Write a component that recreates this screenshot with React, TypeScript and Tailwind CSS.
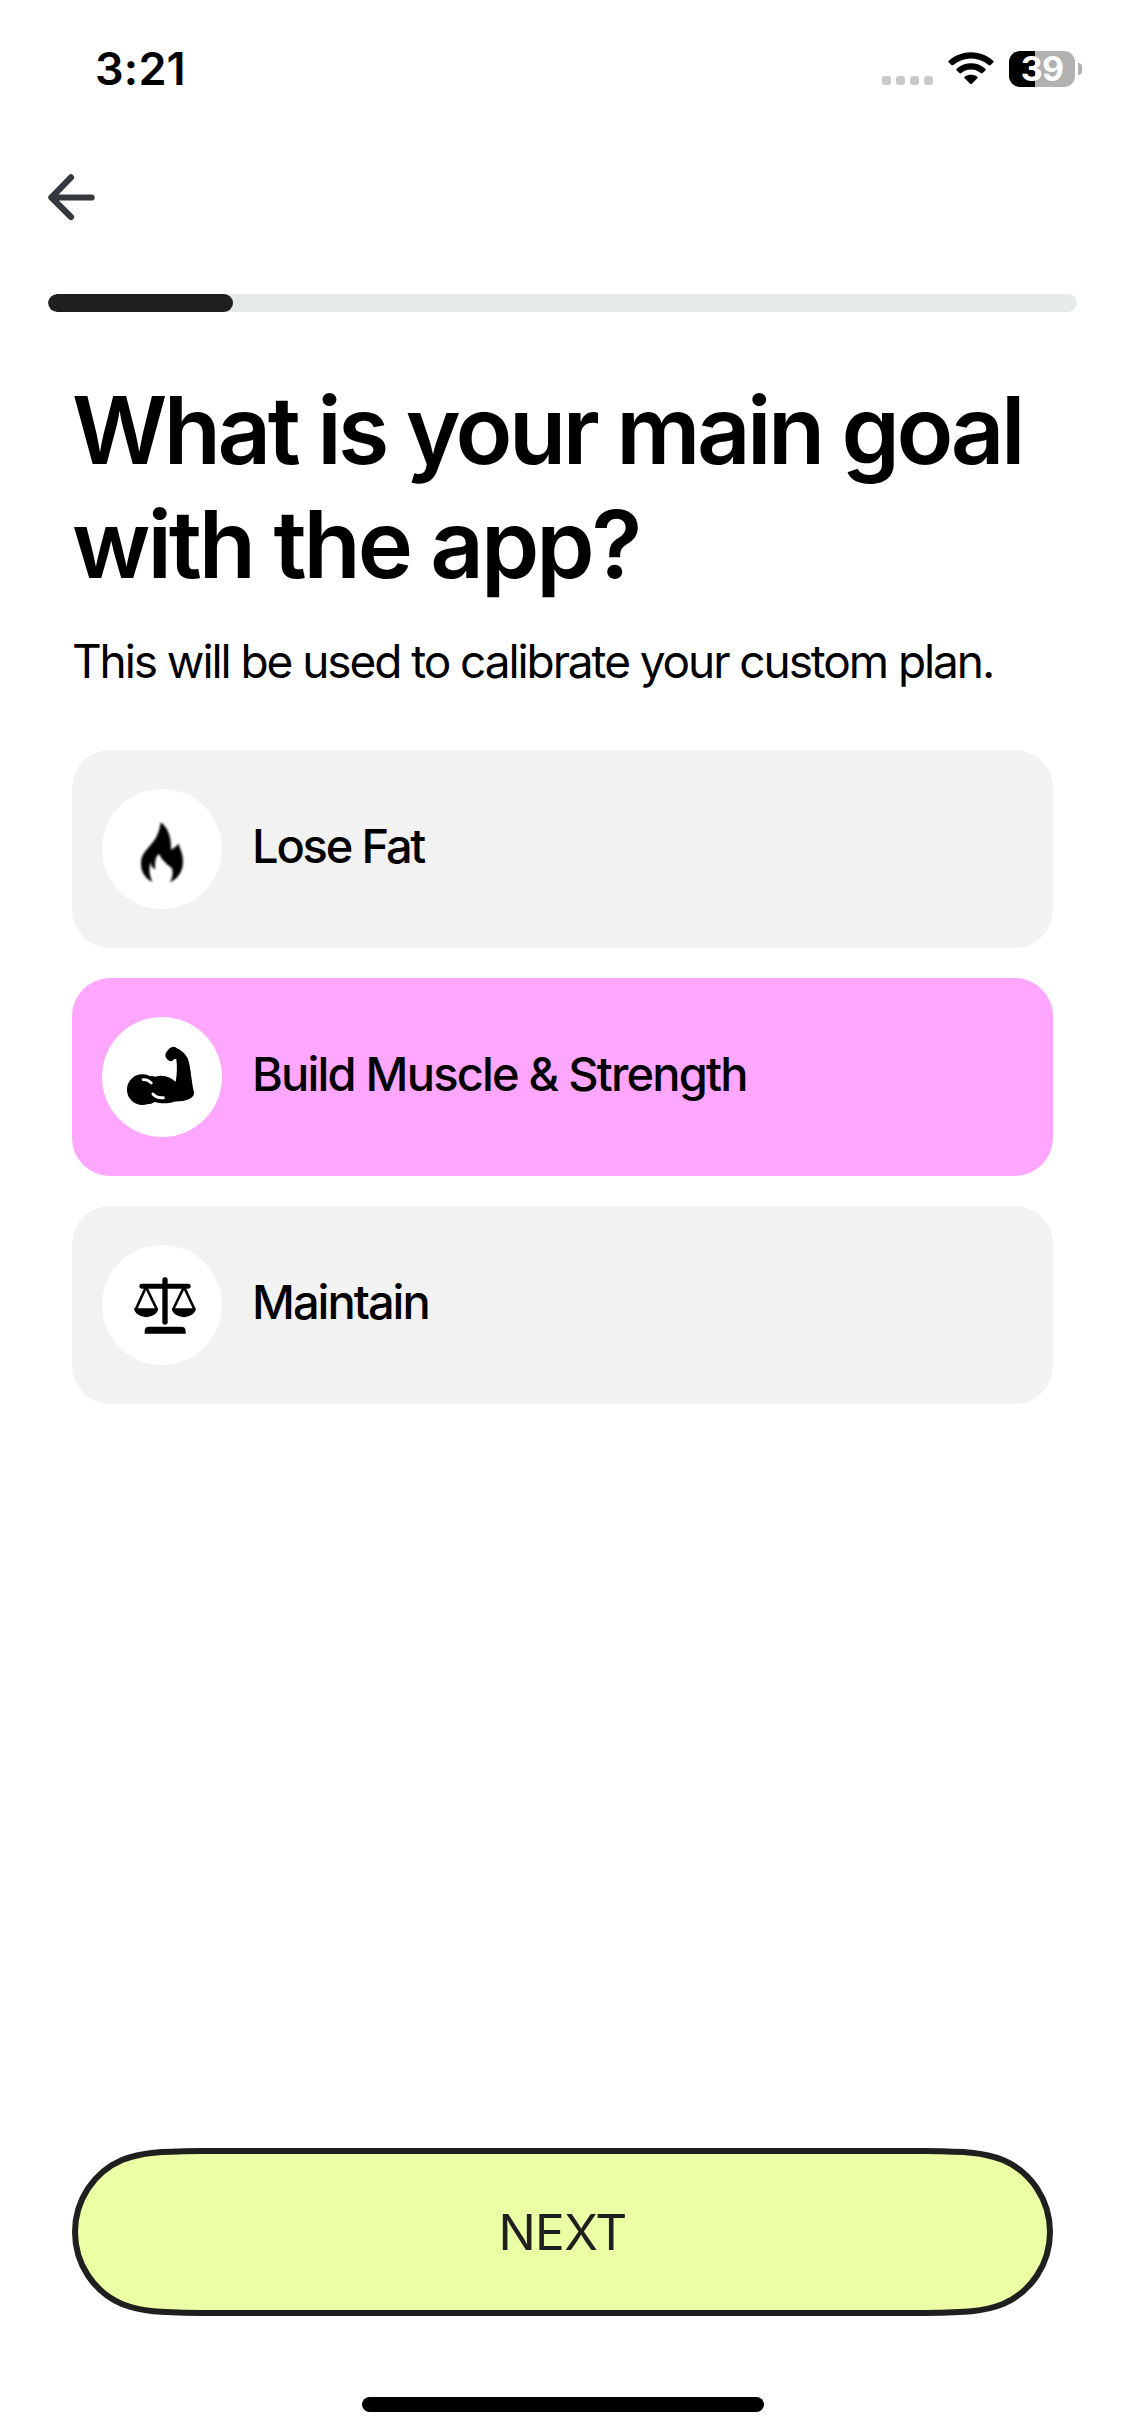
import React, { useState } from 'react';

type Goal = 'lose-fat' | 'build-muscle' | 'maintain';

const FlameIcon = () => (
    <svg viewBox="0 0 360 360" className="w-full h-full blur-[0.8px]" fill="#000">
        <path d="M176 100 C196 116 208 138 207 182 C217 178 224 172 230 163 C231 176 244 192 243 220 C242 248 229 268 203 281 C212 268 214 252 210 238 C201 229 180 216 171 194 C161 204 158 214 160 241 C152 238 147 231 146 220 C140 240 142 258 151 279 C129 268 116 247 117 222 C118 176 168 172 176 100 Z" />
    </svg>
);

const BicepsIcon = () => (
    <svg viewBox="0 0 360 360" className="w-full h-full" fill="#000">
        <circle cx="121" cy="218" r="46" />
        <path d="M141 178 Q150 175 160 179 C180 172 203 177 221 194 C225 172 226 150 223 126 L216 126 Q212 134 205 133 Q191 127 190 115 Q190 106 203 94 Q213 85 224 93 Q246 103 257 124 C267 150 268 195 276 226 Q277 237 268 242 C252 253 233 252 216 254 C197 261 176 260 158 255 Q148 262 136 262 Z" />
        <path d="M123 188 Q137 186 148 198" fill="none" stroke="#fff" strokeWidth="8" strokeLinecap="round" />
        <path d="M153 231 Q164 244 184 242" fill="none" stroke="#fff" strokeWidth="9" strokeLinecap="round" />
    </svg>
);

const ScaleIcon = () => (
    <svg viewBox="0 0 360 360" className="w-full h-full" fill="#000">
        <rect x="181" y="97" width="16" height="142" rx="7" />
        <rect x="112" y="116" width="154" height="15" rx="7" />
        <path d="M128 266 V258 Q128 245 142 245 H237 Q251 245 251 258 V266 Z" />
        <path d="M132 126 L102 192 M132 126 L164 192 M246 126 L214 192 M246 126 L277 192" stroke="#000" strokeWidth="8" />
        <path d="M96 190 H169 Q169 200 160 207 Q133 227 105 207 Q96 200 96 190 Z" />
        <path d="M209 190 H282 Q282 200 273 207 Q246 227 218 207 Q209 200 209 190 Z" />
    </svg>
);

const GOALS: { id: Goal; label: string; icon: React.ReactNode; tracking: string }[] = [
    { id: 'lose-fat', label: 'Lose Fat', icon: <FlameIcon />, tracking: 'tracking-[-2.2px]' },
    { id: 'build-muscle', label: 'Build Muscle & Strength', icon: <BicepsIcon />, tracking: 'tracking-[-1.8px]' },
    { id: 'maintain', label: 'Maintain', icon: <ScaleIcon />, tracking: 'tracking-[-2px]' }
];

const StatusBar = () => (
    <div className="flex h-[138px] items-start justify-between pl-[95px] pr-[43px] pt-[51px]">
        <span className="text-[45px] leading-[36px] font-semibold tracking-[0.2px]">3:21</span>
        <div className="flex h-9 items-center">
            {/* No cellular signal */}
            <div className="mr-[15px] mt-[23px] flex gap-[5px]">
                {[0, 1, 2, 3].map((dot) => (
                    <div key={dot} className="size-[9px] rounded-[3px] bg-[#c9c9c9]" />
                ))}
            </div>
            <svg viewBox="0 0 46 34" className="mr-[15px] h-[34px] w-[46px]" fill="#000">
                <path d="M0.8 10.6 Q-0.2 9.6 0.8 8.8 C13.5 -2.6 32.5 -2.6 45.2 8.8 Q46.2 9.6 45.2 10.6 L42.6 13.1 Q41.7 13.9 40.7 13.1 C30.7 4.4 15.3 4.4 5.3 13.1 Q4.3 13.9 3.4 13.1 Z" />
                <path d="M8.7 18.4 Q7.8 17.5 8.8 16.6 C17 9.6 29 9.6 37.2 16.6 Q38.2 17.5 37.3 18.4 L34.6 21 Q33.7 21.8 32.7 21 C27 16.4 19 16.4 13.3 21 Q12.3 21.8 11.4 21 Z" />
                <path d="M16.7 26.3 Q15.8 25.3 16.9 24.5 C20.6 22 25.4 22 29.1 24.5 Q30.2 25.3 29.3 26.3 L23.9 31.8 Q23 32.6 22.1 31.8 Z" />
            </svg>
            <div className="flex h-9 w-[66px] items-center justify-center rounded-[11px] bg-linear-to-r from-black from-[39%] to-[#b1b1b1] to-[39%]">
                <span className="text-[34px] leading-none font-bold tracking-[-0.8px] text-white">39</span>
            </div>
            <div className="ml-[3px] h-3 w-1 rounded-r-full bg-[#b1b1b1]" />
        </div>
    </div>
);

// Pill outline whose ends ease into the straight edges
const PillOutline = () => (
    <svg viewBox="0 0 981 168" className="absolute inset-0 h-full w-full" fill="#ebffa4" stroke="#1f1f1f" strokeWidth="6">
        <path d="M128 3 C88 3.5 70 4 50 12 C22 24 3 52 3 84 C3 116 22 144 50 156 C70 164 88 164.5 128 165 H853 C893 164.5 911 164 931 156 C959 144 978 116 978 84 C978 52 959 24 931 12 C911 4 893 3.5 853 3 Z" />
    </svg>
);

const App: React.FC = () => {
    const [selected, setSelected] = useState<Goal>('build-muscle');

    return (
        <div className="flex h-[2436px] w-[1125px] flex-col bg-white font-['Inter',sans-serif] text-black">
            <StatusBar />

            <button aria-label="Back" className="mt-9 ml-12 size-[47px]">
                <svg viewBox="0 0 47 47" className="size-[47px]" fill="none" stroke="#36383f" strokeWidth="6.2" strokeLinecap="round" strokeLinejoin="round">
                    <path d="M23 3.4 L3.4 23.5 L23 43 M3.4 23.5 H43.6" />
                </svg>
            </button>

            <div className="mx-12 mt-[73px] h-[18px] overflow-hidden rounded-full bg-[#e7eaea]">
                <div className="h-full w-[18%] rounded-full bg-[#1f1f1f]" />
            </div>

            <main className="flex flex-col px-[72px] pt-[61px]">
                <h1 className="text-[93.5px] leading-[114px] font-semibold tracking-[-3.55px] whitespace-nowrap">
                    What is your main goal
                    <br />
                    <span className="tracking-[-3.1px]">with the app?</span>
                </h1>
                <p className="mt-[30px] text-[46px] leading-[60px] tracking-[-2.08px] whitespace-nowrap">
                    This will be used to calibrate your custom plan.
                </p>

                <div className="mt-[59px] flex flex-col gap-[30px]">
                    {GOALS.map((goal) => (
                        <button
                            key={goal.id}
                            onClick={() => setSelected(goal.id)}
                            className={`flex h-[198px] items-center gap-[30px] rounded-[38px] px-[30px] text-left ${
                                selected === goal.id ? 'bg-[#ffa6ff]' : 'bg-[#f2f2f2]'
                            }`}
                        >
                            <div className="size-[120px] shrink-0 rounded-full bg-white">{goal.icon}</div>
                            <span className={`pb-[6px] text-[47px] leading-[60px] font-medium whitespace-nowrap ${goal.tracking}`}>
                                {goal.label}
                            </span>
                        </button>
                    ))}
                </div>
            </main>

            <div className="mt-auto px-[72px]">
                <button className="relative flex h-[168px] w-full items-center justify-center text-[49.5px] tracking-[-0.7px] text-[#1f1f1f]">
                    <PillOutline />
                    <span className="relative">NEXT</span>
                </button>
            </div>

            {/* Home indicator */}
            <div className="mx-auto mt-[81px] mb-6 h-[15px] w-[402px] shrink-0 rounded-full bg-black" />
        </div>
    );
};

export default App;
